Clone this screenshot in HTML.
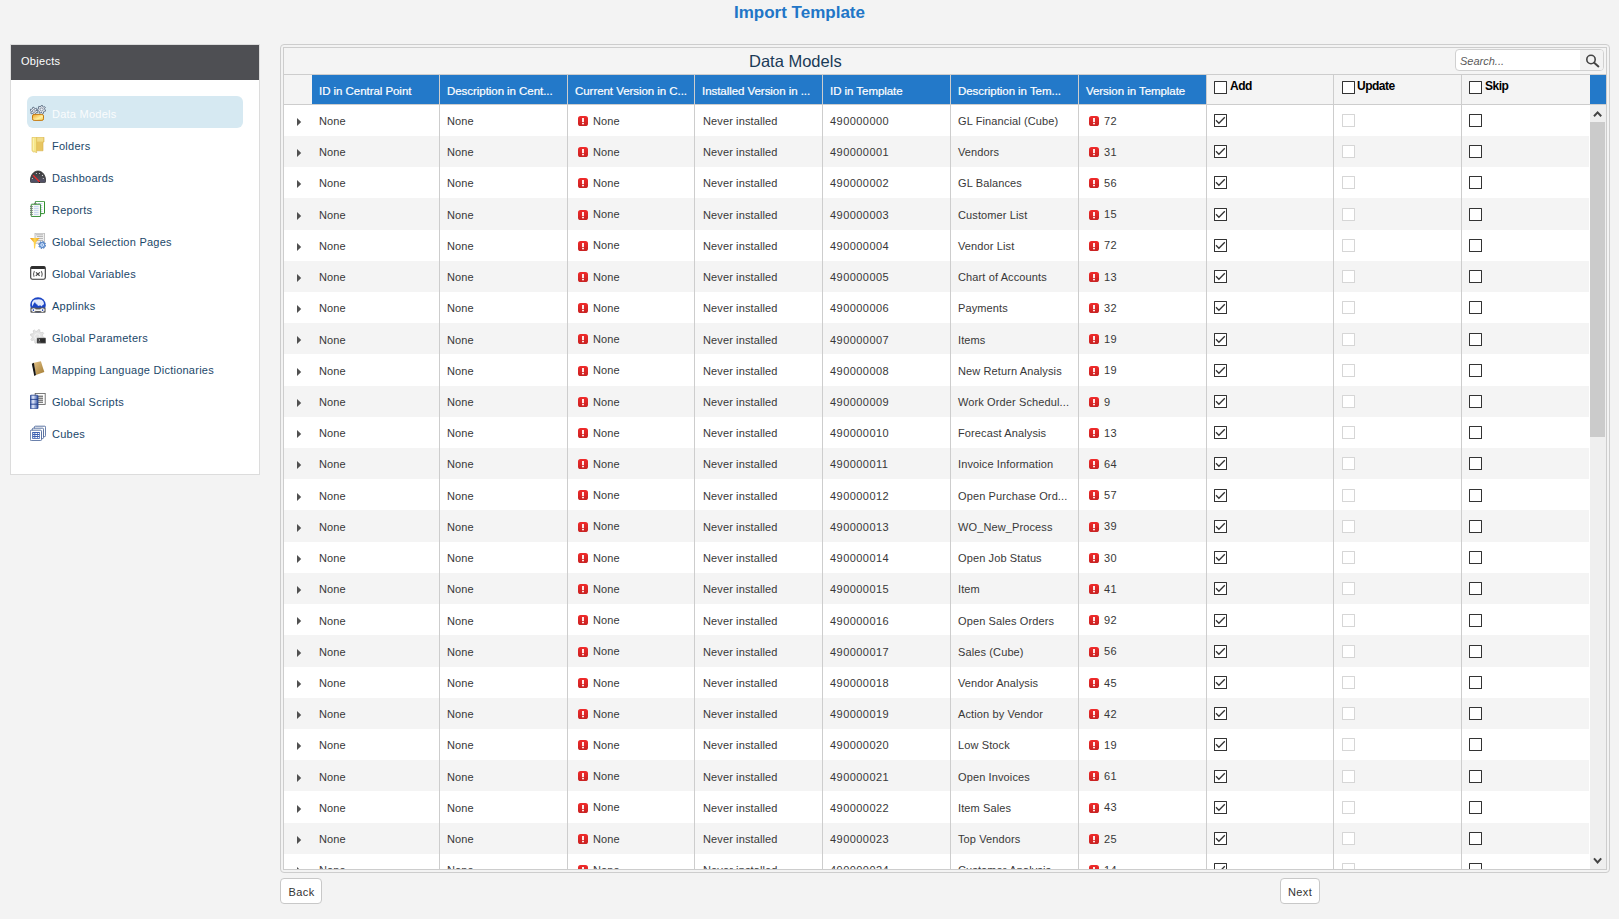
<!DOCTYPE html><html><head><meta charset='utf-8'><style>
*{margin:0;padding:0;box-sizing:border-box}
html,body{width:1619px;height:919px;overflow:hidden;background:#f3f3f3;font-family:"Liberation Sans",sans-serif;position:relative}
.a{position:absolute}
.t{position:absolute;white-space:nowrap;line-height:1}
#title{left:734px;top:4px;font-size:17px;font-weight:bold;color:#2176c7}
#side{left:10px;top:44px;width:250px;height:431px;background:#fff;border:1px solid #dcdcdc}
#sideh{left:11px;top:45px;width:248px;height:35px;background:#4e4f53}
#sideh span{position:absolute;left:10px;top:11px;font-size:11px;color:#fff;letter-spacing:0.3px;line-height:1}
.sel{left:27px;top:96px;width:216px;height:32px;background:#d6e9f2;border-radius:6px}
.it{position:absolute;left:52px;font-size:11px;color:#1b4769;letter-spacing:0.25px;line-height:1;white-space:nowrap}
.ic{position:absolute;left:29px;width:18px;height:18px}
#outer{left:280px;top:44px;width:1330px;height:829px;border:1px solid #cdcdcd;border-radius:4px}
#inner{left:283px;top:47px;width:1324px;height:823px;border:1px solid #cdcdcd;background:#f4f4f4;overflow:hidden}
.hline{left:284px;width:1322px;height:1px;background:#cdcdcd}
.vline{width:1px;background:#cdcdcd}
.hb{top:75px;height:29px;background:#2379c9}
.ht{font-size:11.5px;color:#fff;top:85.5px;letter-spacing:-0.05px;-webkit-text-stroke:0.2px #fff}
.cell{font-size:11px;color:#383838;letter-spacing:0.12px}
.num{letter-spacing:0.45px}
.row{left:284px;width:1305px;height:31.2px}
.odd{background:#f4f4f4}
.even{background:#fff}
.cb{position:absolute;width:13px;height:13px;border:1px solid #333;background:#fff;border-radius:0.5px}
.cbd{border-color:#d6d6d6}
.err{position:absolute;width:10px;height:10px}
.err svg,.cb svg{display:block}
#clip{left:0;top:0;width:1619px;height:869px;overflow:hidden}
.btn{position:absolute;top:878px;height:26px;background:#fff;border:1px solid #c8c8c8;border-radius:4px;font-size:11px;color:#333}
.btn span{position:absolute;top:8px;line-height:1;white-space:nowrap;letter-spacing:0.4px}
</style></head><body>
<div class="t" id="title">Import Template</div>
<div class="a" id="side"></div><div class="a" id="sideh"><span>Objects</span></div>
<div class="a sel"></div>
<div class="it" style="top:109px;color:#fafcfd">Data Models</div>
<svg class="a" style="left:30px;top:105px" width="16" height="16" viewBox="0 0 16 16"><defs><linearGradient id="ob" x1="0" y1="0" x2="1" y2="1"><stop offset="0" stop-color="#f0a020"/><stop offset="0.6" stop-color="#fff0a0"/><stop offset="1" stop-color="#f5c84a"/></linearGradient></defs><path d="M6.71 6.00 L7.62 6.79 L7.29 7.73 L6.09 7.77 L5.31 8.44 L5.07 9.61 L4.10 9.79 L3.46 8.78 L2.49 8.44 L1.36 8.82 L0.71 8.07 L1.27 7.01 L1.09 6.00 L0.18 5.21 L0.51 4.27 L1.71 4.23 L2.49 3.56 L2.73 2.39 L3.70 2.21 L4.34 3.22 L5.31 3.56 L6.44 3.18 L7.09 3.93 L6.53 4.99Z" fill="#eef2f8" stroke="#3a4c66" stroke-width="0.75" stroke-linejoin="round"/><circle cx="3.9" cy="6.0" r="1.44" fill="none" stroke="#7a8796" stroke-width="0.9"/><path d="M14.71 4.50 L15.73 5.25 L15.46 6.15 L14.19 6.21 L13.54 6.93 L13.59 8.20 L12.72 8.55 L11.88 7.60 L10.91 7.53 L9.95 8.36 L9.13 7.90 L9.35 6.65 L8.80 5.85 L7.55 5.62 L7.40 4.69 L8.52 4.08 L8.80 3.15 L8.20 2.03 L8.84 1.34 L10.01 1.83 L10.91 1.47 L11.41 0.30 L12.35 0.37 L12.69 1.59 L13.54 2.07 L14.76 1.74 L15.30 2.51 L14.56 3.54Z" fill="#eef2f8" stroke="#3a4c66" stroke-width="0.75" stroke-linejoin="round"/><circle cx="11.6" cy="4.5" r="1.60" fill="none" stroke="#7a8796" stroke-width="0.9"/><rect x="2.5" y="9.4" width="11" height="6" rx="1.6" fill="url(#ob)" stroke="#c47a12" stroke-width="1"/></svg>
<div class="it" style="top:141px;color:#1b4769">Folders</div>
<svg class="a" style="left:30px;top:137px" width="16" height="16" viewBox="0 0 16 16"><path d="M6.3 0.2 H14 V5 H13 V13.8 H6.3 Z" fill="#e8c661" stroke="#d6b048" stroke-width="0.6"/><rect x="6.5" y="0.6" width="6.8" height="4" fill="#f1dc8a"/><path d="M2 0.3 H6.6 V15.9 L5 14.8 L3.4 15 L2 13.8 Z" fill="#f6e68a" stroke="#dcb94c" stroke-width="0.6"/><path d="M3.3 1 V13.5" stroke="#fdf6b8" stroke-width="1"/></svg>
<div class="it" style="top:173px;color:#1b4769">Dashboards</div>
<svg class="a" style="left:30px;top:169px" width="16" height="16" viewBox="0 0 16 16"><defs><linearGradient id="dg" x1="0" y1="0" x2="0" y2="1"><stop offset="0" stop-color="#3a3a3a"/><stop offset="0.55" stop-color="#4a4a50"/><stop offset="1" stop-color="#565670"/></linearGradient></defs><path d="M0.3 12.6 C0.3 5.5 4 2 8 2 C12 2 15.7 5.5 15.7 12.6 Q15.7 13.4 14.8 13.4 H1.2 Q0.3 13.4 0.3 12.6 Z" fill="url(#dg)" stroke="#222" stroke-width="0.7"/><g fill="#d8d8d8"><circle cx="2.4" cy="9.5" r="0.6"/><circle cx="6.4" cy="4.5" r="0.6"/><circle cx="9.5" cy="4.5" r="0.6"/><circle cx="12.5" cy="6.4" r="0.6"/><circle cx="13.3" cy="9.5" r="0.6"/></g><path d="M3.1 6.3 L9.7 13" stroke="#e82a2a" stroke-width="1.3"/><path d="M9.2 12.9 L9.8 14" stroke="#111" stroke-width="1"/></svg>
<div class="it" style="top:205px;color:#1b4769">Reports</div>
<svg class="a" style="left:30px;top:201px" width="16" height="16" viewBox="0 0 16 16"><rect x="5.3" y="0.3" width="9.2" height="12.3" rx="0.6" fill="#fff" stroke="#2f8f2f" stroke-width="1"/><g stroke="#b8c8ec" stroke-width="0.7"><path d="M8 2.5H12.5M8 4.5H12.5M8 6.5H12.5M8 8.5H12.5M8 10.5H12.5"/></g><rect x="1.2" y="3.2" width="9.4" height="12.4" rx="0.6" fill="#f4f8f4" stroke="#2e8a2e" stroke-width="1"/><g stroke="#b8c8ec" stroke-width="0.8"><path d="M4 5.4H8.6M4 7.4H8.6M4 9.4H8.6M4 11.4H8.6M4 13.4H8.6"/></g><g fill="#777"><rect x="0" y="5" width="2.8" height="0.9"/><rect x="0" y="7" width="2.8" height="0.9"/><rect x="0" y="9" width="2.8" height="0.9"/><rect x="0" y="11" width="2.8" height="0.9"/><rect x="0" y="13" width="2.8" height="0.9"/><rect x="4" y="2" width="2.5" height="1"/></g></svg>
<div class="it" style="top:237px;color:#1b4769">Global Selection Pages</div>
<svg class="a" style="left:30px;top:233px" width="16" height="16" viewBox="0 0 16 16"><rect x="5" y="0.2" width="9.5" height="10" fill="#eee" stroke="#b4b4b4" stroke-width="0.8"/><g stroke="#aaa" stroke-width="0.8"><path d="M6 1.8H13M7 3.5H13M7 5.5H13M7 7.5H13"/></g><defs><linearGradient id="fg" x1="0" y1="0" x2="1" y2="0"><stop offset="0" stop-color="#e88a10"/><stop offset="0.5" stop-color="#ffd850"/><stop offset="1" stop-color="#e89a18"/></linearGradient></defs><path d="M0 5 L9.6 5 L5.8 9.5 L5 15.8 L4 15.2 L3.8 9.5 Z" fill="url(#fg)"/><path d="M14.86 12.00 L15.76 12.56 L15.58 13.25 L14.52 13.30 L14.08 13.88 L14.32 14.91 L13.71 15.27 L12.92 14.56 L12.20 14.66 L11.64 15.56 L10.95 15.38 L10.90 14.32 L10.32 13.88 L9.29 14.12 L8.93 13.51 L9.64 12.72 L9.54 12.00 L8.64 11.44 L8.82 10.75 L9.88 10.70 L10.32 10.12 L10.08 9.09 L10.69 8.73 L11.48 9.44 L12.20 9.34 L12.76 8.44 L13.45 8.62 L13.50 9.68 L14.08 10.12 L15.11 9.88 L15.47 10.49 L14.76 11.28Z" fill="#6a9ad8" stroke="#3d6fb5" stroke-width="0.7" stroke-linejoin="round"/><circle cx="12.2" cy="12.0" r="1.37" fill="none" stroke="#e8f0ff" stroke-width="0.9"/></svg>
<div class="it" style="top:269px;color:#1b4769">Global Variables</div>
<svg class="a" style="left:30px;top:265px" width="16" height="16" viewBox="0 0 16 16"><rect x="0.7" y="1.6" width="14.6" height="12.6" rx="1.8" fill="#fff" stroke="#333" stroke-width="1.1"/><rect x="0.7" y="1.6" width="14.6" height="2.4" rx="1" fill="#2e2e2e"/><path d="M4.4 6.1 Q2.8 9 4.1 11.8" fill="none" stroke="#666" stroke-width="1.1"/><path d="M11.3 6.1 Q13 9 11.6 11.8" fill="none" stroke="#666" stroke-width="1.1"/><path d="M6 7.4 L9.6 10.8 M9.9 7.4 L5.8 10.8" fill="none" stroke="#444" stroke-width="1.2"/></svg>
<div class="it" style="top:301px;color:#1b4769">Applinks</div>
<svg class="a" style="left:30px;top:297px" width="16" height="16" viewBox="0 0 16 16"><circle cx="8" cy="8" r="7.8" fill="#1a44c4"/><path d="M3.2 3.4 Q5 2 7 2.6 Q9 1.6 11.5 2.8 Q13.8 4 14 6.5 Q13.2 9 12.6 8 L11.5 9.6 L10.2 8.3 L8.6 9 L7.4 8.2 Q5.5 6.5 4.6 5.4 L3.6 6.8 L2.4 9.4 Q1.6 7 2 5.4 Z" fill="#eef3ff" opacity="0.95"/><path d="M4.6 5.4 Q6.5 7 7.6 8.4" stroke="#3a64d0" stroke-width="0.9" fill="none"/><path d="M0.4 11.4 Q0.4 10.4 1.4 10.4 L6 10.4 Q8 11 10 10.4 L14.6 10.4 Q15.6 10.4 15.6 11.4 V14.8 Q15.6 15.8 14.6 15.8 H1.4 Q0.4 15.8 0.4 14.8 Z" fill="#5a5a5a"/><ellipse cx="3.6" cy="13.1" rx="2.3" ry="1.8" fill="#fff"/><ellipse cx="12.4" cy="13.1" rx="2.3" ry="1.8" fill="#fff"/><rect x="5.2" y="12.4" width="5.6" height="1.6" fill="#f4f4f4"/><ellipse cx="3.4" cy="13.1" rx="0.8" ry="0.9" fill="#1a3cb0"/><ellipse cx="12.6" cy="13.1" rx="0.8" ry="0.9" fill="#1a3cb0"/></svg>
<div class="it" style="top:333px;color:#1b4769">Global Parameters</div>
<svg class="a" style="left:30px;top:329px" width="16" height="16" viewBox="0 0 16 16"><path d="M12.48 7.40 L14.21 8.50 L13.87 9.82 L11.82 9.93 L10.96 11.06 L11.41 13.06 L10.23 13.76 L8.71 12.39 L7.30 12.58 L6.20 14.31 L4.88 13.97 L4.77 11.92 L3.64 11.06 L1.64 11.51 L0.94 10.33 L2.31 8.81 L2.12 7.40 L0.39 6.30 L0.73 4.98 L2.78 4.87 L3.64 3.74 L3.19 1.74 L4.37 1.04 L5.89 2.41 L7.30 2.22 L8.40 0.49 L9.72 0.83 L9.83 2.88 L10.96 3.74 L12.96 3.29 L13.66 4.47 L12.29 5.99Z" fill="#e4e4e4" stroke="#d0d0d0" stroke-width="0.8" stroke-linejoin="round"/><circle cx="7.3" cy="7.4" r="2.66" fill="none" stroke="#f6f6f6" stroke-width="0.9"/><rect x="7" y="8.9" width="8.8" height="5.3" rx="0.5" fill="#2c2c2c" stroke="#888" stroke-width="0.5"/><path d="M8.5 10 L10 11 L8.5 12" stroke="#ddd" stroke-width="0.6" fill="none"/><path d="M8.3 13.1H10.5" stroke="#aaa" stroke-width="0.5"/></svg>
<div class="it" style="top:365px;color:#1b4769">Mapping Language Dictionaries</div>
<svg class="a" style="left:30px;top:361px" width="16" height="16" viewBox="0 0 16 16"><defs><linearGradient id="bk" x1="0" y1="0" x2="1" y2="1"><stop offset="0" stop-color="#e2c288"/><stop offset="1" stop-color="#a27a30"/></linearGradient></defs><path d="M3.8 1.8 L10.9 0.2 L14.3 11 L5.9 13.9 Z" fill="url(#bk)"/><path d="M1.8 2.8 L3.9 1.8 L6 13.9 L4.3 15 Z" fill="#151515"/></svg>
<div class="it" style="top:397px;color:#1b4769">Global Scripts</div>
<svg class="a" style="left:30px;top:393px" width="16" height="16" viewBox="0 0 16 16"><rect x="5.2" y="0.4" width="10" height="11" fill="#fff" stroke="#666" stroke-width="0.9"/><g stroke="#333" stroke-width="0.9"><path d="M8 3.2H13M8 5.2H13M8 7.2H13M8 9.2H13"/></g><defs><linearGradient id="db" x1="0" y1="0" x2="1" y2="0"><stop offset="0" stop-color="#3455a8"/><stop offset="0.35" stop-color="#e8eeff"/><stop offset="1" stop-color="#2f4fa0"/></linearGradient></defs><rect x="0.2" y="2.2" width="7.8" height="13.6" rx="0.8" fill="url(#db)" stroke="#213f8c" stroke-width="0.8"/><path d="M0.2 6.4H8M0.2 11.2H8" stroke="#213f8c" stroke-width="0.9"/></svg>
<div class="it" style="top:429px;color:#1b4769">Cubes</div>
<svg class="a" style="left:30px;top:425px" width="16" height="16" viewBox="0 0 16 16"><g fill="#fff" stroke="#4a6498" stroke-width="0.9"><rect x="4.4" y="1.2" width="11.2" height="10.4" rx="1"/><rect x="2.3" y="3.2" width="11.2" height="10.4" rx="1"/><rect x="0.3" y="5.2" width="11.2" height="10.4" rx="1"/></g><rect x="2.2" y="7" width="7.6" height="6.8" fill="#3b5fb0"/><g fill="#fff"><rect x="3.2" y="8" width="1.2" height="1"/><rect x="5.3" y="8" width="2" height="1"/><rect x="8" y="8" width="1.1" height="1"/><rect x="3.2" y="10" width="1.2" height="1"/><rect x="5.3" y="10" width="2" height="1"/><rect x="8" y="10" width="1.1" height="1"/><rect x="3.2" y="12" width="1.2" height="1"/><rect x="5.3" y="12" width="2" height="1"/><rect x="8" y="12" width="1.1" height="1"/></g></svg>
<div class="a" id="outer"></div><div class="a" id="inner"></div>
<div class="t" style="left:749px;top:53px;font-size:16.5px;color:#1a3a57">Data Models</div>
<div class="a" style="left:1455px;top:49px;width:149px;height:22px;border:1px solid #d0d0d0;border-radius:4px;background:#fff;overflow:hidden"><div class="a" style="left:124px;top:0;width:24px;height:20px;background:#f2f2f2"></div></div>
<div class="t" style="left:1460px;top:56px;font-size:11px;font-style:italic;color:#5a5a5a">Search...</div>
<svg class="a" style="left:1584px;top:52px" width="16" height="16" viewBox="0 0 16 16"><circle cx="7" cy="7.5" r="4.2" fill="none" stroke="#444" stroke-width="1.6"/><path d="M10.2 10.7 L14.4 14.4" stroke="#444" stroke-width="2" stroke-linecap="round"/></svg>
<div class="a hline" style="top:74px"></div>
<div class="a" style="left:284px;top:75px;width:28px;height:29px;background:#f4f4f4"></div>
<div class="a hb" style="left:312px;width:894px"></div>
<div class="a hb" style="left:1590px;width:16px"></div>
<div class="t ht" style="left:319px">ID in Central Point</div>
<div class="t ht" style="left:447px">Description in Cent...</div>
<div class="t ht" style="left:575px">Current Version in C...</div>
<div class="t ht" style="left:702px">Installed Version in ...</div>
<div class="t ht" style="left:830px">ID in Template</div>
<div class="t ht" style="left:958px">Description in Tem...</div>
<div class="t ht" style="left:1086px">Version in Template</div>
<div class="cb" style="left:1214px;top:81px"></div>
<div class="t" style="left:1230px;top:80px;font-size:12px;font-weight:bold;color:#000;letter-spacing:-0.5px">Add</div>
<div class="cb" style="left:1342px;top:81px"></div>
<div class="t" style="left:1357px;top:80px;font-size:12px;font-weight:bold;color:#000;letter-spacing:-0.5px">Update</div>
<div class="cb" style="left:1469px;top:81px"></div>
<div class="t" style="left:1485px;top:80px;font-size:12px;font-weight:bold;color:#000;letter-spacing:-0.5px">Skip</div>
<div class="a hline" style="top:104px"></div>
<div class="a" id="clip">
<div class="a row even" style="top:104.6px"></div>
<svg class="a" style="left:297px;top:117.9px" width="5" height="8"><path d="M0 0 L4.2 4 L0 8 Z" fill="#505050"/></svg>
<div class="t cell" style="left:319px;top:116.0px">None</div>
<div class="t cell" style="left:447px;top:116.0px">None</div>
<div class="err" style="left:578px;top:115.8px"><svg width="10" height="10" viewBox="0 0 10 10"><defs><linearGradient id="rg" x1="0" y1="0" x2="0" y2="1"><stop offset="0" stop-color="#f02a2a"/><stop offset="1" stop-color="#c82222"/></linearGradient></defs><rect x="0" y="0" width="10" height="10" rx="2.6" fill="url(#rg)"/><rect x="4.1" y="2" width="1.8" height="4.2" fill="#fff"/><rect x="4.1" y="7" width="1.8" height="1.3" fill="#fff"/></svg></div>
<div class="t cell" style="left:593px;top:115.5px">None</div>
<div class="t cell" style="left:703px;top:116.0px">Never installed</div>
<div class="t cell num" style="left:830px;top:116.0px">490000000</div>
<div class="t cell" style="left:958px;top:116.0px">GL Financial (Cube)</div>
<div class="err" style="left:1089px;top:115.8px"><svg width="10" height="10" viewBox="0 0 10 10"><defs><linearGradient id="rg" x1="0" y1="0" x2="0" y2="1"><stop offset="0" stop-color="#f02a2a"/><stop offset="1" stop-color="#c82222"/></linearGradient></defs><rect x="0" y="0" width="10" height="10" rx="2.6" fill="url(#rg)"/><rect x="4.1" y="2" width="1.8" height="4.2" fill="#fff"/><rect x="4.1" y="7" width="1.8" height="1.3" fill="#fff"/></svg></div>
<div class="t cell num" style="left:1104px;top:115.5px">72</div>
<div class="cb" style="left:1214px;top:114.0px"><svg class="a" style="left:0px;top:0px" width="11" height="11" viewBox="0 0 11 11"><path d="M1 5.3 L3.9 8.3 L9.8 2.3" fill="none" stroke="#333" stroke-width="1.3"/></svg></div>
<div class="cb cbd" style="left:1342px;top:114.0px"></div>
<div class="cb" style="left:1469px;top:114.0px"></div>
<div class="a row odd" style="top:135.8px"></div>
<svg class="a" style="left:297px;top:149.1px" width="5" height="8"><path d="M0 0 L4.2 4 L0 8 Z" fill="#505050"/></svg>
<div class="t cell" style="left:319px;top:147.2px">None</div>
<div class="t cell" style="left:447px;top:147.2px">None</div>
<div class="err" style="left:578px;top:147.0px"><svg width="10" height="10" viewBox="0 0 10 10"><defs><linearGradient id="rg" x1="0" y1="0" x2="0" y2="1"><stop offset="0" stop-color="#f02a2a"/><stop offset="1" stop-color="#c82222"/></linearGradient></defs><rect x="0" y="0" width="10" height="10" rx="2.6" fill="url(#rg)"/><rect x="4.1" y="2" width="1.8" height="4.2" fill="#fff"/><rect x="4.1" y="7" width="1.8" height="1.3" fill="#fff"/></svg></div>
<div class="t cell" style="left:593px;top:146.7px">None</div>
<div class="t cell" style="left:703px;top:147.2px">Never installed</div>
<div class="t cell num" style="left:830px;top:147.2px">490000001</div>
<div class="t cell" style="left:958px;top:147.2px">Vendors</div>
<div class="err" style="left:1089px;top:147.0px"><svg width="10" height="10" viewBox="0 0 10 10"><defs><linearGradient id="rg" x1="0" y1="0" x2="0" y2="1"><stop offset="0" stop-color="#f02a2a"/><stop offset="1" stop-color="#c82222"/></linearGradient></defs><rect x="0" y="0" width="10" height="10" rx="2.6" fill="url(#rg)"/><rect x="4.1" y="2" width="1.8" height="4.2" fill="#fff"/><rect x="4.1" y="7" width="1.8" height="1.3" fill="#fff"/></svg></div>
<div class="t cell num" style="left:1104px;top:146.7px">31</div>
<div class="cb" style="left:1214px;top:145.2px"><svg class="a" style="left:0px;top:0px" width="11" height="11" viewBox="0 0 11 11"><path d="M1 5.3 L3.9 8.3 L9.8 2.3" fill="none" stroke="#333" stroke-width="1.3"/></svg></div>
<div class="cb cbd" style="left:1342px;top:145.2px"></div>
<div class="cb" style="left:1469px;top:145.2px"></div>
<div class="a row even" style="top:167.0px"></div>
<svg class="a" style="left:297px;top:180.3px" width="5" height="8"><path d="M0 0 L4.2 4 L0 8 Z" fill="#505050"/></svg>
<div class="t cell" style="left:319px;top:178.4px">None</div>
<div class="t cell" style="left:447px;top:178.4px">None</div>
<div class="err" style="left:578px;top:178.2px"><svg width="10" height="10" viewBox="0 0 10 10"><defs><linearGradient id="rg" x1="0" y1="0" x2="0" y2="1"><stop offset="0" stop-color="#f02a2a"/><stop offset="1" stop-color="#c82222"/></linearGradient></defs><rect x="0" y="0" width="10" height="10" rx="2.6" fill="url(#rg)"/><rect x="4.1" y="2" width="1.8" height="4.2" fill="#fff"/><rect x="4.1" y="7" width="1.8" height="1.3" fill="#fff"/></svg></div>
<div class="t cell" style="left:593px;top:177.9px">None</div>
<div class="t cell" style="left:703px;top:178.4px">Never installed</div>
<div class="t cell num" style="left:830px;top:178.4px">490000002</div>
<div class="t cell" style="left:958px;top:178.4px">GL Balances</div>
<div class="err" style="left:1089px;top:178.2px"><svg width="10" height="10" viewBox="0 0 10 10"><defs><linearGradient id="rg" x1="0" y1="0" x2="0" y2="1"><stop offset="0" stop-color="#f02a2a"/><stop offset="1" stop-color="#c82222"/></linearGradient></defs><rect x="0" y="0" width="10" height="10" rx="2.6" fill="url(#rg)"/><rect x="4.1" y="2" width="1.8" height="4.2" fill="#fff"/><rect x="4.1" y="7" width="1.8" height="1.3" fill="#fff"/></svg></div>
<div class="t cell num" style="left:1104px;top:177.9px">56</div>
<div class="cb" style="left:1214px;top:176.4px"><svg class="a" style="left:0px;top:0px" width="11" height="11" viewBox="0 0 11 11"><path d="M1 5.3 L3.9 8.3 L9.8 2.3" fill="none" stroke="#333" stroke-width="1.3"/></svg></div>
<div class="cb cbd" style="left:1342px;top:176.4px"></div>
<div class="cb" style="left:1469px;top:176.4px"></div>
<div class="a row odd" style="top:198.3px"></div>
<svg class="a" style="left:297px;top:211.6px" width="5" height="8"><path d="M0 0 L4.2 4 L0 8 Z" fill="#505050"/></svg>
<div class="t cell" style="left:319px;top:209.7px">None</div>
<div class="t cell" style="left:447px;top:209.7px">None</div>
<div class="err" style="left:578px;top:209.5px"><svg width="10" height="10" viewBox="0 0 10 10"><defs><linearGradient id="rg" x1="0" y1="0" x2="0" y2="1"><stop offset="0" stop-color="#f02a2a"/><stop offset="1" stop-color="#c82222"/></linearGradient></defs><rect x="0" y="0" width="10" height="10" rx="2.6" fill="url(#rg)"/><rect x="4.1" y="2" width="1.8" height="4.2" fill="#fff"/><rect x="4.1" y="7" width="1.8" height="1.3" fill="#fff"/></svg></div>
<div class="t cell" style="left:593px;top:209.2px">None</div>
<div class="t cell" style="left:703px;top:209.7px">Never installed</div>
<div class="t cell num" style="left:830px;top:209.7px">490000003</div>
<div class="t cell" style="left:958px;top:209.7px">Customer List</div>
<div class="err" style="left:1089px;top:209.5px"><svg width="10" height="10" viewBox="0 0 10 10"><defs><linearGradient id="rg" x1="0" y1="0" x2="0" y2="1"><stop offset="0" stop-color="#f02a2a"/><stop offset="1" stop-color="#c82222"/></linearGradient></defs><rect x="0" y="0" width="10" height="10" rx="2.6" fill="url(#rg)"/><rect x="4.1" y="2" width="1.8" height="4.2" fill="#fff"/><rect x="4.1" y="7" width="1.8" height="1.3" fill="#fff"/></svg></div>
<div class="t cell num" style="left:1104px;top:209.2px">15</div>
<div class="cb" style="left:1214px;top:207.7px"><svg class="a" style="left:0px;top:0px" width="11" height="11" viewBox="0 0 11 11"><path d="M1 5.3 L3.9 8.3 L9.8 2.3" fill="none" stroke="#333" stroke-width="1.3"/></svg></div>
<div class="cb cbd" style="left:1342px;top:207.7px"></div>
<div class="cb" style="left:1469px;top:207.7px"></div>
<div class="a row even" style="top:229.5px"></div>
<svg class="a" style="left:297px;top:242.8px" width="5" height="8"><path d="M0 0 L4.2 4 L0 8 Z" fill="#505050"/></svg>
<div class="t cell" style="left:319px;top:240.9px">None</div>
<div class="t cell" style="left:447px;top:240.9px">None</div>
<div class="err" style="left:578px;top:240.7px"><svg width="10" height="10" viewBox="0 0 10 10"><defs><linearGradient id="rg" x1="0" y1="0" x2="0" y2="1"><stop offset="0" stop-color="#f02a2a"/><stop offset="1" stop-color="#c82222"/></linearGradient></defs><rect x="0" y="0" width="10" height="10" rx="2.6" fill="url(#rg)"/><rect x="4.1" y="2" width="1.8" height="4.2" fill="#fff"/><rect x="4.1" y="7" width="1.8" height="1.3" fill="#fff"/></svg></div>
<div class="t cell" style="left:593px;top:240.4px">None</div>
<div class="t cell" style="left:703px;top:240.9px">Never installed</div>
<div class="t cell num" style="left:830px;top:240.9px">490000004</div>
<div class="t cell" style="left:958px;top:240.9px">Vendor List</div>
<div class="err" style="left:1089px;top:240.7px"><svg width="10" height="10" viewBox="0 0 10 10"><defs><linearGradient id="rg" x1="0" y1="0" x2="0" y2="1"><stop offset="0" stop-color="#f02a2a"/><stop offset="1" stop-color="#c82222"/></linearGradient></defs><rect x="0" y="0" width="10" height="10" rx="2.6" fill="url(#rg)"/><rect x="4.1" y="2" width="1.8" height="4.2" fill="#fff"/><rect x="4.1" y="7" width="1.8" height="1.3" fill="#fff"/></svg></div>
<div class="t cell num" style="left:1104px;top:240.4px">72</div>
<div class="cb" style="left:1214px;top:238.9px"><svg class="a" style="left:0px;top:0px" width="11" height="11" viewBox="0 0 11 11"><path d="M1 5.3 L3.9 8.3 L9.8 2.3" fill="none" stroke="#333" stroke-width="1.3"/></svg></div>
<div class="cb cbd" style="left:1342px;top:238.9px"></div>
<div class="cb" style="left:1469px;top:238.9px"></div>
<div class="a row odd" style="top:260.7px"></div>
<svg class="a" style="left:297px;top:274.0px" width="5" height="8"><path d="M0 0 L4.2 4 L0 8 Z" fill="#505050"/></svg>
<div class="t cell" style="left:319px;top:272.1px">None</div>
<div class="t cell" style="left:447px;top:272.1px">None</div>
<div class="err" style="left:578px;top:271.9px"><svg width="10" height="10" viewBox="0 0 10 10"><defs><linearGradient id="rg" x1="0" y1="0" x2="0" y2="1"><stop offset="0" stop-color="#f02a2a"/><stop offset="1" stop-color="#c82222"/></linearGradient></defs><rect x="0" y="0" width="10" height="10" rx="2.6" fill="url(#rg)"/><rect x="4.1" y="2" width="1.8" height="4.2" fill="#fff"/><rect x="4.1" y="7" width="1.8" height="1.3" fill="#fff"/></svg></div>
<div class="t cell" style="left:593px;top:271.6px">None</div>
<div class="t cell" style="left:703px;top:272.1px">Never installed</div>
<div class="t cell num" style="left:830px;top:272.1px">490000005</div>
<div class="t cell" style="left:958px;top:272.1px">Chart of Accounts</div>
<div class="err" style="left:1089px;top:271.9px"><svg width="10" height="10" viewBox="0 0 10 10"><defs><linearGradient id="rg" x1="0" y1="0" x2="0" y2="1"><stop offset="0" stop-color="#f02a2a"/><stop offset="1" stop-color="#c82222"/></linearGradient></defs><rect x="0" y="0" width="10" height="10" rx="2.6" fill="url(#rg)"/><rect x="4.1" y="2" width="1.8" height="4.2" fill="#fff"/><rect x="4.1" y="7" width="1.8" height="1.3" fill="#fff"/></svg></div>
<div class="t cell num" style="left:1104px;top:271.6px">13</div>
<div class="cb" style="left:1214px;top:270.1px"><svg class="a" style="left:0px;top:0px" width="11" height="11" viewBox="0 0 11 11"><path d="M1 5.3 L3.9 8.3 L9.8 2.3" fill="none" stroke="#333" stroke-width="1.3"/></svg></div>
<div class="cb cbd" style="left:1342px;top:270.1px"></div>
<div class="cb" style="left:1469px;top:270.1px"></div>
<div class="a row even" style="top:291.9px"></div>
<svg class="a" style="left:297px;top:305.2px" width="5" height="8"><path d="M0 0 L4.2 4 L0 8 Z" fill="#505050"/></svg>
<div class="t cell" style="left:319px;top:303.3px">None</div>
<div class="t cell" style="left:447px;top:303.3px">None</div>
<div class="err" style="left:578px;top:303.1px"><svg width="10" height="10" viewBox="0 0 10 10"><defs><linearGradient id="rg" x1="0" y1="0" x2="0" y2="1"><stop offset="0" stop-color="#f02a2a"/><stop offset="1" stop-color="#c82222"/></linearGradient></defs><rect x="0" y="0" width="10" height="10" rx="2.6" fill="url(#rg)"/><rect x="4.1" y="2" width="1.8" height="4.2" fill="#fff"/><rect x="4.1" y="7" width="1.8" height="1.3" fill="#fff"/></svg></div>
<div class="t cell" style="left:593px;top:302.8px">None</div>
<div class="t cell" style="left:703px;top:303.3px">Never installed</div>
<div class="t cell num" style="left:830px;top:303.3px">490000006</div>
<div class="t cell" style="left:958px;top:303.3px">Payments</div>
<div class="err" style="left:1089px;top:303.1px"><svg width="10" height="10" viewBox="0 0 10 10"><defs><linearGradient id="rg" x1="0" y1="0" x2="0" y2="1"><stop offset="0" stop-color="#f02a2a"/><stop offset="1" stop-color="#c82222"/></linearGradient></defs><rect x="0" y="0" width="10" height="10" rx="2.6" fill="url(#rg)"/><rect x="4.1" y="2" width="1.8" height="4.2" fill="#fff"/><rect x="4.1" y="7" width="1.8" height="1.3" fill="#fff"/></svg></div>
<div class="t cell num" style="left:1104px;top:302.8px">32</div>
<div class="cb" style="left:1214px;top:301.3px"><svg class="a" style="left:0px;top:0px" width="11" height="11" viewBox="0 0 11 11"><path d="M1 5.3 L3.9 8.3 L9.8 2.3" fill="none" stroke="#333" stroke-width="1.3"/></svg></div>
<div class="cb cbd" style="left:1342px;top:301.3px"></div>
<div class="cb" style="left:1469px;top:301.3px"></div>
<div class="a row odd" style="top:323.1px"></div>
<svg class="a" style="left:297px;top:336.4px" width="5" height="8"><path d="M0 0 L4.2 4 L0 8 Z" fill="#505050"/></svg>
<div class="t cell" style="left:319px;top:334.5px">None</div>
<div class="t cell" style="left:447px;top:334.5px">None</div>
<div class="err" style="left:578px;top:334.3px"><svg width="10" height="10" viewBox="0 0 10 10"><defs><linearGradient id="rg" x1="0" y1="0" x2="0" y2="1"><stop offset="0" stop-color="#f02a2a"/><stop offset="1" stop-color="#c82222"/></linearGradient></defs><rect x="0" y="0" width="10" height="10" rx="2.6" fill="url(#rg)"/><rect x="4.1" y="2" width="1.8" height="4.2" fill="#fff"/><rect x="4.1" y="7" width="1.8" height="1.3" fill="#fff"/></svg></div>
<div class="t cell" style="left:593px;top:334.0px">None</div>
<div class="t cell" style="left:703px;top:334.5px">Never installed</div>
<div class="t cell num" style="left:830px;top:334.5px">490000007</div>
<div class="t cell" style="left:958px;top:334.5px">Items</div>
<div class="err" style="left:1089px;top:334.3px"><svg width="10" height="10" viewBox="0 0 10 10"><defs><linearGradient id="rg" x1="0" y1="0" x2="0" y2="1"><stop offset="0" stop-color="#f02a2a"/><stop offset="1" stop-color="#c82222"/></linearGradient></defs><rect x="0" y="0" width="10" height="10" rx="2.6" fill="url(#rg)"/><rect x="4.1" y="2" width="1.8" height="4.2" fill="#fff"/><rect x="4.1" y="7" width="1.8" height="1.3" fill="#fff"/></svg></div>
<div class="t cell num" style="left:1104px;top:334.0px">19</div>
<div class="cb" style="left:1214px;top:332.5px"><svg class="a" style="left:0px;top:0px" width="11" height="11" viewBox="0 0 11 11"><path d="M1 5.3 L3.9 8.3 L9.8 2.3" fill="none" stroke="#333" stroke-width="1.3"/></svg></div>
<div class="cb cbd" style="left:1342px;top:332.5px"></div>
<div class="cb" style="left:1469px;top:332.5px"></div>
<div class="a row even" style="top:354.4px"></div>
<svg class="a" style="left:297px;top:367.7px" width="5" height="8"><path d="M0 0 L4.2 4 L0 8 Z" fill="#505050"/></svg>
<div class="t cell" style="left:319px;top:365.8px">None</div>
<div class="t cell" style="left:447px;top:365.8px">None</div>
<div class="err" style="left:578px;top:365.6px"><svg width="10" height="10" viewBox="0 0 10 10"><defs><linearGradient id="rg" x1="0" y1="0" x2="0" y2="1"><stop offset="0" stop-color="#f02a2a"/><stop offset="1" stop-color="#c82222"/></linearGradient></defs><rect x="0" y="0" width="10" height="10" rx="2.6" fill="url(#rg)"/><rect x="4.1" y="2" width="1.8" height="4.2" fill="#fff"/><rect x="4.1" y="7" width="1.8" height="1.3" fill="#fff"/></svg></div>
<div class="t cell" style="left:593px;top:365.3px">None</div>
<div class="t cell" style="left:703px;top:365.8px">Never installed</div>
<div class="t cell num" style="left:830px;top:365.8px">490000008</div>
<div class="t cell" style="left:958px;top:365.8px">New Return Analysis</div>
<div class="err" style="left:1089px;top:365.6px"><svg width="10" height="10" viewBox="0 0 10 10"><defs><linearGradient id="rg" x1="0" y1="0" x2="0" y2="1"><stop offset="0" stop-color="#f02a2a"/><stop offset="1" stop-color="#c82222"/></linearGradient></defs><rect x="0" y="0" width="10" height="10" rx="2.6" fill="url(#rg)"/><rect x="4.1" y="2" width="1.8" height="4.2" fill="#fff"/><rect x="4.1" y="7" width="1.8" height="1.3" fill="#fff"/></svg></div>
<div class="t cell num" style="left:1104px;top:365.3px">19</div>
<div class="cb" style="left:1214px;top:363.8px"><svg class="a" style="left:0px;top:0px" width="11" height="11" viewBox="0 0 11 11"><path d="M1 5.3 L3.9 8.3 L9.8 2.3" fill="none" stroke="#333" stroke-width="1.3"/></svg></div>
<div class="cb cbd" style="left:1342px;top:363.8px"></div>
<div class="cb" style="left:1469px;top:363.8px"></div>
<div class="a row odd" style="top:385.6px"></div>
<svg class="a" style="left:297px;top:398.9px" width="5" height="8"><path d="M0 0 L4.2 4 L0 8 Z" fill="#505050"/></svg>
<div class="t cell" style="left:319px;top:397.0px">None</div>
<div class="t cell" style="left:447px;top:397.0px">None</div>
<div class="err" style="left:578px;top:396.8px"><svg width="10" height="10" viewBox="0 0 10 10"><defs><linearGradient id="rg" x1="0" y1="0" x2="0" y2="1"><stop offset="0" stop-color="#f02a2a"/><stop offset="1" stop-color="#c82222"/></linearGradient></defs><rect x="0" y="0" width="10" height="10" rx="2.6" fill="url(#rg)"/><rect x="4.1" y="2" width="1.8" height="4.2" fill="#fff"/><rect x="4.1" y="7" width="1.8" height="1.3" fill="#fff"/></svg></div>
<div class="t cell" style="left:593px;top:396.5px">None</div>
<div class="t cell" style="left:703px;top:397.0px">Never installed</div>
<div class="t cell num" style="left:830px;top:397.0px">490000009</div>
<div class="t cell" style="left:958px;top:397.0px">Work Order Schedul...</div>
<div class="err" style="left:1089px;top:396.8px"><svg width="10" height="10" viewBox="0 0 10 10"><defs><linearGradient id="rg" x1="0" y1="0" x2="0" y2="1"><stop offset="0" stop-color="#f02a2a"/><stop offset="1" stop-color="#c82222"/></linearGradient></defs><rect x="0" y="0" width="10" height="10" rx="2.6" fill="url(#rg)"/><rect x="4.1" y="2" width="1.8" height="4.2" fill="#fff"/><rect x="4.1" y="7" width="1.8" height="1.3" fill="#fff"/></svg></div>
<div class="t cell num" style="left:1104px;top:396.5px">9</div>
<div class="cb" style="left:1214px;top:395.0px"><svg class="a" style="left:0px;top:0px" width="11" height="11" viewBox="0 0 11 11"><path d="M1 5.3 L3.9 8.3 L9.8 2.3" fill="none" stroke="#333" stroke-width="1.3"/></svg></div>
<div class="cb cbd" style="left:1342px;top:395.0px"></div>
<div class="cb" style="left:1469px;top:395.0px"></div>
<div class="a row even" style="top:416.8px"></div>
<svg class="a" style="left:297px;top:430.1px" width="5" height="8"><path d="M0 0 L4.2 4 L0 8 Z" fill="#505050"/></svg>
<div class="t cell" style="left:319px;top:428.2px">None</div>
<div class="t cell" style="left:447px;top:428.2px">None</div>
<div class="err" style="left:578px;top:428.0px"><svg width="10" height="10" viewBox="0 0 10 10"><defs><linearGradient id="rg" x1="0" y1="0" x2="0" y2="1"><stop offset="0" stop-color="#f02a2a"/><stop offset="1" stop-color="#c82222"/></linearGradient></defs><rect x="0" y="0" width="10" height="10" rx="2.6" fill="url(#rg)"/><rect x="4.1" y="2" width="1.8" height="4.2" fill="#fff"/><rect x="4.1" y="7" width="1.8" height="1.3" fill="#fff"/></svg></div>
<div class="t cell" style="left:593px;top:427.7px">None</div>
<div class="t cell" style="left:703px;top:428.2px">Never installed</div>
<div class="t cell num" style="left:830px;top:428.2px">490000010</div>
<div class="t cell" style="left:958px;top:428.2px">Forecast Analysis</div>
<div class="err" style="left:1089px;top:428.0px"><svg width="10" height="10" viewBox="0 0 10 10"><defs><linearGradient id="rg" x1="0" y1="0" x2="0" y2="1"><stop offset="0" stop-color="#f02a2a"/><stop offset="1" stop-color="#c82222"/></linearGradient></defs><rect x="0" y="0" width="10" height="10" rx="2.6" fill="url(#rg)"/><rect x="4.1" y="2" width="1.8" height="4.2" fill="#fff"/><rect x="4.1" y="7" width="1.8" height="1.3" fill="#fff"/></svg></div>
<div class="t cell num" style="left:1104px;top:427.7px">13</div>
<div class="cb" style="left:1214px;top:426.2px"><svg class="a" style="left:0px;top:0px" width="11" height="11" viewBox="0 0 11 11"><path d="M1 5.3 L3.9 8.3 L9.8 2.3" fill="none" stroke="#333" stroke-width="1.3"/></svg></div>
<div class="cb cbd" style="left:1342px;top:426.2px"></div>
<div class="cb" style="left:1469px;top:426.2px"></div>
<div class="a row odd" style="top:448.0px"></div>
<svg class="a" style="left:297px;top:461.3px" width="5" height="8"><path d="M0 0 L4.2 4 L0 8 Z" fill="#505050"/></svg>
<div class="t cell" style="left:319px;top:459.4px">None</div>
<div class="t cell" style="left:447px;top:459.4px">None</div>
<div class="err" style="left:578px;top:459.2px"><svg width="10" height="10" viewBox="0 0 10 10"><defs><linearGradient id="rg" x1="0" y1="0" x2="0" y2="1"><stop offset="0" stop-color="#f02a2a"/><stop offset="1" stop-color="#c82222"/></linearGradient></defs><rect x="0" y="0" width="10" height="10" rx="2.6" fill="url(#rg)"/><rect x="4.1" y="2" width="1.8" height="4.2" fill="#fff"/><rect x="4.1" y="7" width="1.8" height="1.3" fill="#fff"/></svg></div>
<div class="t cell" style="left:593px;top:458.9px">None</div>
<div class="t cell" style="left:703px;top:459.4px">Never installed</div>
<div class="t cell num" style="left:830px;top:459.4px">490000011</div>
<div class="t cell" style="left:958px;top:459.4px">Invoice Information</div>
<div class="err" style="left:1089px;top:459.2px"><svg width="10" height="10" viewBox="0 0 10 10"><defs><linearGradient id="rg" x1="0" y1="0" x2="0" y2="1"><stop offset="0" stop-color="#f02a2a"/><stop offset="1" stop-color="#c82222"/></linearGradient></defs><rect x="0" y="0" width="10" height="10" rx="2.6" fill="url(#rg)"/><rect x="4.1" y="2" width="1.8" height="4.2" fill="#fff"/><rect x="4.1" y="7" width="1.8" height="1.3" fill="#fff"/></svg></div>
<div class="t cell num" style="left:1104px;top:458.9px">64</div>
<div class="cb" style="left:1214px;top:457.4px"><svg class="a" style="left:0px;top:0px" width="11" height="11" viewBox="0 0 11 11"><path d="M1 5.3 L3.9 8.3 L9.8 2.3" fill="none" stroke="#333" stroke-width="1.3"/></svg></div>
<div class="cb cbd" style="left:1342px;top:457.4px"></div>
<div class="cb" style="left:1469px;top:457.4px"></div>
<div class="a row even" style="top:479.2px"></div>
<svg class="a" style="left:297px;top:492.5px" width="5" height="8"><path d="M0 0 L4.2 4 L0 8 Z" fill="#505050"/></svg>
<div class="t cell" style="left:319px;top:490.6px">None</div>
<div class="t cell" style="left:447px;top:490.6px">None</div>
<div class="err" style="left:578px;top:490.4px"><svg width="10" height="10" viewBox="0 0 10 10"><defs><linearGradient id="rg" x1="0" y1="0" x2="0" y2="1"><stop offset="0" stop-color="#f02a2a"/><stop offset="1" stop-color="#c82222"/></linearGradient></defs><rect x="0" y="0" width="10" height="10" rx="2.6" fill="url(#rg)"/><rect x="4.1" y="2" width="1.8" height="4.2" fill="#fff"/><rect x="4.1" y="7" width="1.8" height="1.3" fill="#fff"/></svg></div>
<div class="t cell" style="left:593px;top:490.1px">None</div>
<div class="t cell" style="left:703px;top:490.6px">Never installed</div>
<div class="t cell num" style="left:830px;top:490.6px">490000012</div>
<div class="t cell" style="left:958px;top:490.6px">Open Purchase Ord...</div>
<div class="err" style="left:1089px;top:490.4px"><svg width="10" height="10" viewBox="0 0 10 10"><defs><linearGradient id="rg" x1="0" y1="0" x2="0" y2="1"><stop offset="0" stop-color="#f02a2a"/><stop offset="1" stop-color="#c82222"/></linearGradient></defs><rect x="0" y="0" width="10" height="10" rx="2.6" fill="url(#rg)"/><rect x="4.1" y="2" width="1.8" height="4.2" fill="#fff"/><rect x="4.1" y="7" width="1.8" height="1.3" fill="#fff"/></svg></div>
<div class="t cell num" style="left:1104px;top:490.1px">57</div>
<div class="cb" style="left:1214px;top:488.6px"><svg class="a" style="left:0px;top:0px" width="11" height="11" viewBox="0 0 11 11"><path d="M1 5.3 L3.9 8.3 L9.8 2.3" fill="none" stroke="#333" stroke-width="1.3"/></svg></div>
<div class="cb cbd" style="left:1342px;top:488.6px"></div>
<div class="cb" style="left:1469px;top:488.6px"></div>
<div class="a row odd" style="top:510.5px"></div>
<svg class="a" style="left:297px;top:523.8px" width="5" height="8"><path d="M0 0 L4.2 4 L0 8 Z" fill="#505050"/></svg>
<div class="t cell" style="left:319px;top:521.9px">None</div>
<div class="t cell" style="left:447px;top:521.9px">None</div>
<div class="err" style="left:578px;top:521.7px"><svg width="10" height="10" viewBox="0 0 10 10"><defs><linearGradient id="rg" x1="0" y1="0" x2="0" y2="1"><stop offset="0" stop-color="#f02a2a"/><stop offset="1" stop-color="#c82222"/></linearGradient></defs><rect x="0" y="0" width="10" height="10" rx="2.6" fill="url(#rg)"/><rect x="4.1" y="2" width="1.8" height="4.2" fill="#fff"/><rect x="4.1" y="7" width="1.8" height="1.3" fill="#fff"/></svg></div>
<div class="t cell" style="left:593px;top:521.4px">None</div>
<div class="t cell" style="left:703px;top:521.9px">Never installed</div>
<div class="t cell num" style="left:830px;top:521.9px">490000013</div>
<div class="t cell" style="left:958px;top:521.9px">WO_New_Process</div>
<div class="err" style="left:1089px;top:521.7px"><svg width="10" height="10" viewBox="0 0 10 10"><defs><linearGradient id="rg" x1="0" y1="0" x2="0" y2="1"><stop offset="0" stop-color="#f02a2a"/><stop offset="1" stop-color="#c82222"/></linearGradient></defs><rect x="0" y="0" width="10" height="10" rx="2.6" fill="url(#rg)"/><rect x="4.1" y="2" width="1.8" height="4.2" fill="#fff"/><rect x="4.1" y="7" width="1.8" height="1.3" fill="#fff"/></svg></div>
<div class="t cell num" style="left:1104px;top:521.4px">39</div>
<div class="cb" style="left:1214px;top:519.9px"><svg class="a" style="left:0px;top:0px" width="11" height="11" viewBox="0 0 11 11"><path d="M1 5.3 L3.9 8.3 L9.8 2.3" fill="none" stroke="#333" stroke-width="1.3"/></svg></div>
<div class="cb cbd" style="left:1342px;top:519.9px"></div>
<div class="cb" style="left:1469px;top:519.9px"></div>
<div class="a row even" style="top:541.7px"></div>
<svg class="a" style="left:297px;top:555.0px" width="5" height="8"><path d="M0 0 L4.2 4 L0 8 Z" fill="#505050"/></svg>
<div class="t cell" style="left:319px;top:553.1px">None</div>
<div class="t cell" style="left:447px;top:553.1px">None</div>
<div class="err" style="left:578px;top:552.9px"><svg width="10" height="10" viewBox="0 0 10 10"><defs><linearGradient id="rg" x1="0" y1="0" x2="0" y2="1"><stop offset="0" stop-color="#f02a2a"/><stop offset="1" stop-color="#c82222"/></linearGradient></defs><rect x="0" y="0" width="10" height="10" rx="2.6" fill="url(#rg)"/><rect x="4.1" y="2" width="1.8" height="4.2" fill="#fff"/><rect x="4.1" y="7" width="1.8" height="1.3" fill="#fff"/></svg></div>
<div class="t cell" style="left:593px;top:552.6px">None</div>
<div class="t cell" style="left:703px;top:553.1px">Never installed</div>
<div class="t cell num" style="left:830px;top:553.1px">490000014</div>
<div class="t cell" style="left:958px;top:553.1px">Open Job Status</div>
<div class="err" style="left:1089px;top:552.9px"><svg width="10" height="10" viewBox="0 0 10 10"><defs><linearGradient id="rg" x1="0" y1="0" x2="0" y2="1"><stop offset="0" stop-color="#f02a2a"/><stop offset="1" stop-color="#c82222"/></linearGradient></defs><rect x="0" y="0" width="10" height="10" rx="2.6" fill="url(#rg)"/><rect x="4.1" y="2" width="1.8" height="4.2" fill="#fff"/><rect x="4.1" y="7" width="1.8" height="1.3" fill="#fff"/></svg></div>
<div class="t cell num" style="left:1104px;top:552.6px">30</div>
<div class="cb" style="left:1214px;top:551.1px"><svg class="a" style="left:0px;top:0px" width="11" height="11" viewBox="0 0 11 11"><path d="M1 5.3 L3.9 8.3 L9.8 2.3" fill="none" stroke="#333" stroke-width="1.3"/></svg></div>
<div class="cb cbd" style="left:1342px;top:551.1px"></div>
<div class="cb" style="left:1469px;top:551.1px"></div>
<div class="a row odd" style="top:572.9px"></div>
<svg class="a" style="left:297px;top:586.2px" width="5" height="8"><path d="M0 0 L4.2 4 L0 8 Z" fill="#505050"/></svg>
<div class="t cell" style="left:319px;top:584.3px">None</div>
<div class="t cell" style="left:447px;top:584.3px">None</div>
<div class="err" style="left:578px;top:584.1px"><svg width="10" height="10" viewBox="0 0 10 10"><defs><linearGradient id="rg" x1="0" y1="0" x2="0" y2="1"><stop offset="0" stop-color="#f02a2a"/><stop offset="1" stop-color="#c82222"/></linearGradient></defs><rect x="0" y="0" width="10" height="10" rx="2.6" fill="url(#rg)"/><rect x="4.1" y="2" width="1.8" height="4.2" fill="#fff"/><rect x="4.1" y="7" width="1.8" height="1.3" fill="#fff"/></svg></div>
<div class="t cell" style="left:593px;top:583.8px">None</div>
<div class="t cell" style="left:703px;top:584.3px">Never installed</div>
<div class="t cell num" style="left:830px;top:584.3px">490000015</div>
<div class="t cell" style="left:958px;top:584.3px">Item</div>
<div class="err" style="left:1089px;top:584.1px"><svg width="10" height="10" viewBox="0 0 10 10"><defs><linearGradient id="rg" x1="0" y1="0" x2="0" y2="1"><stop offset="0" stop-color="#f02a2a"/><stop offset="1" stop-color="#c82222"/></linearGradient></defs><rect x="0" y="0" width="10" height="10" rx="2.6" fill="url(#rg)"/><rect x="4.1" y="2" width="1.8" height="4.2" fill="#fff"/><rect x="4.1" y="7" width="1.8" height="1.3" fill="#fff"/></svg></div>
<div class="t cell num" style="left:1104px;top:583.8px">41</div>
<div class="cb" style="left:1214px;top:582.3px"><svg class="a" style="left:0px;top:0px" width="11" height="11" viewBox="0 0 11 11"><path d="M1 5.3 L3.9 8.3 L9.8 2.3" fill="none" stroke="#333" stroke-width="1.3"/></svg></div>
<div class="cb cbd" style="left:1342px;top:582.3px"></div>
<div class="cb" style="left:1469px;top:582.3px"></div>
<div class="a row even" style="top:604.1px"></div>
<svg class="a" style="left:297px;top:617.4px" width="5" height="8"><path d="M0 0 L4.2 4 L0 8 Z" fill="#505050"/></svg>
<div class="t cell" style="left:319px;top:615.5px">None</div>
<div class="t cell" style="left:447px;top:615.5px">None</div>
<div class="err" style="left:578px;top:615.3px"><svg width="10" height="10" viewBox="0 0 10 10"><defs><linearGradient id="rg" x1="0" y1="0" x2="0" y2="1"><stop offset="0" stop-color="#f02a2a"/><stop offset="1" stop-color="#c82222"/></linearGradient></defs><rect x="0" y="0" width="10" height="10" rx="2.6" fill="url(#rg)"/><rect x="4.1" y="2" width="1.8" height="4.2" fill="#fff"/><rect x="4.1" y="7" width="1.8" height="1.3" fill="#fff"/></svg></div>
<div class="t cell" style="left:593px;top:615.0px">None</div>
<div class="t cell" style="left:703px;top:615.5px">Never installed</div>
<div class="t cell num" style="left:830px;top:615.5px">490000016</div>
<div class="t cell" style="left:958px;top:615.5px">Open Sales Orders</div>
<div class="err" style="left:1089px;top:615.3px"><svg width="10" height="10" viewBox="0 0 10 10"><defs><linearGradient id="rg" x1="0" y1="0" x2="0" y2="1"><stop offset="0" stop-color="#f02a2a"/><stop offset="1" stop-color="#c82222"/></linearGradient></defs><rect x="0" y="0" width="10" height="10" rx="2.6" fill="url(#rg)"/><rect x="4.1" y="2" width="1.8" height="4.2" fill="#fff"/><rect x="4.1" y="7" width="1.8" height="1.3" fill="#fff"/></svg></div>
<div class="t cell num" style="left:1104px;top:615.0px">92</div>
<div class="cb" style="left:1214px;top:613.5px"><svg class="a" style="left:0px;top:0px" width="11" height="11" viewBox="0 0 11 11"><path d="M1 5.3 L3.9 8.3 L9.8 2.3" fill="none" stroke="#333" stroke-width="1.3"/></svg></div>
<div class="cb cbd" style="left:1342px;top:613.5px"></div>
<div class="cb" style="left:1469px;top:613.5px"></div>
<div class="a row odd" style="top:635.3px"></div>
<svg class="a" style="left:297px;top:648.6px" width="5" height="8"><path d="M0 0 L4.2 4 L0 8 Z" fill="#505050"/></svg>
<div class="t cell" style="left:319px;top:646.7px">None</div>
<div class="t cell" style="left:447px;top:646.7px">None</div>
<div class="err" style="left:578px;top:646.5px"><svg width="10" height="10" viewBox="0 0 10 10"><defs><linearGradient id="rg" x1="0" y1="0" x2="0" y2="1"><stop offset="0" stop-color="#f02a2a"/><stop offset="1" stop-color="#c82222"/></linearGradient></defs><rect x="0" y="0" width="10" height="10" rx="2.6" fill="url(#rg)"/><rect x="4.1" y="2" width="1.8" height="4.2" fill="#fff"/><rect x="4.1" y="7" width="1.8" height="1.3" fill="#fff"/></svg></div>
<div class="t cell" style="left:593px;top:646.2px">None</div>
<div class="t cell" style="left:703px;top:646.7px">Never installed</div>
<div class="t cell num" style="left:830px;top:646.7px">490000017</div>
<div class="t cell" style="left:958px;top:646.7px">Sales (Cube)</div>
<div class="err" style="left:1089px;top:646.5px"><svg width="10" height="10" viewBox="0 0 10 10"><defs><linearGradient id="rg" x1="0" y1="0" x2="0" y2="1"><stop offset="0" stop-color="#f02a2a"/><stop offset="1" stop-color="#c82222"/></linearGradient></defs><rect x="0" y="0" width="10" height="10" rx="2.6" fill="url(#rg)"/><rect x="4.1" y="2" width="1.8" height="4.2" fill="#fff"/><rect x="4.1" y="7" width="1.8" height="1.3" fill="#fff"/></svg></div>
<div class="t cell num" style="left:1104px;top:646.2px">56</div>
<div class="cb" style="left:1214px;top:644.7px"><svg class="a" style="left:0px;top:0px" width="11" height="11" viewBox="0 0 11 11"><path d="M1 5.3 L3.9 8.3 L9.8 2.3" fill="none" stroke="#333" stroke-width="1.3"/></svg></div>
<div class="cb cbd" style="left:1342px;top:644.7px"></div>
<div class="cb" style="left:1469px;top:644.7px"></div>
<div class="a row even" style="top:666.6px"></div>
<svg class="a" style="left:297px;top:679.9px" width="5" height="8"><path d="M0 0 L4.2 4 L0 8 Z" fill="#505050"/></svg>
<div class="t cell" style="left:319px;top:678.0px">None</div>
<div class="t cell" style="left:447px;top:678.0px">None</div>
<div class="err" style="left:578px;top:677.8px"><svg width="10" height="10" viewBox="0 0 10 10"><defs><linearGradient id="rg" x1="0" y1="0" x2="0" y2="1"><stop offset="0" stop-color="#f02a2a"/><stop offset="1" stop-color="#c82222"/></linearGradient></defs><rect x="0" y="0" width="10" height="10" rx="2.6" fill="url(#rg)"/><rect x="4.1" y="2" width="1.8" height="4.2" fill="#fff"/><rect x="4.1" y="7" width="1.8" height="1.3" fill="#fff"/></svg></div>
<div class="t cell" style="left:593px;top:677.5px">None</div>
<div class="t cell" style="left:703px;top:678.0px">Never installed</div>
<div class="t cell num" style="left:830px;top:678.0px">490000018</div>
<div class="t cell" style="left:958px;top:678.0px">Vendor Analysis</div>
<div class="err" style="left:1089px;top:677.8px"><svg width="10" height="10" viewBox="0 0 10 10"><defs><linearGradient id="rg" x1="0" y1="0" x2="0" y2="1"><stop offset="0" stop-color="#f02a2a"/><stop offset="1" stop-color="#c82222"/></linearGradient></defs><rect x="0" y="0" width="10" height="10" rx="2.6" fill="url(#rg)"/><rect x="4.1" y="2" width="1.8" height="4.2" fill="#fff"/><rect x="4.1" y="7" width="1.8" height="1.3" fill="#fff"/></svg></div>
<div class="t cell num" style="left:1104px;top:677.5px">45</div>
<div class="cb" style="left:1214px;top:676.0px"><svg class="a" style="left:0px;top:0px" width="11" height="11" viewBox="0 0 11 11"><path d="M1 5.3 L3.9 8.3 L9.8 2.3" fill="none" stroke="#333" stroke-width="1.3"/></svg></div>
<div class="cb cbd" style="left:1342px;top:676.0px"></div>
<div class="cb" style="left:1469px;top:676.0px"></div>
<div class="a row odd" style="top:697.8px"></div>
<svg class="a" style="left:297px;top:711.1px" width="5" height="8"><path d="M0 0 L4.2 4 L0 8 Z" fill="#505050"/></svg>
<div class="t cell" style="left:319px;top:709.2px">None</div>
<div class="t cell" style="left:447px;top:709.2px">None</div>
<div class="err" style="left:578px;top:709.0px"><svg width="10" height="10" viewBox="0 0 10 10"><defs><linearGradient id="rg" x1="0" y1="0" x2="0" y2="1"><stop offset="0" stop-color="#f02a2a"/><stop offset="1" stop-color="#c82222"/></linearGradient></defs><rect x="0" y="0" width="10" height="10" rx="2.6" fill="url(#rg)"/><rect x="4.1" y="2" width="1.8" height="4.2" fill="#fff"/><rect x="4.1" y="7" width="1.8" height="1.3" fill="#fff"/></svg></div>
<div class="t cell" style="left:593px;top:708.7px">None</div>
<div class="t cell" style="left:703px;top:709.2px">Never installed</div>
<div class="t cell num" style="left:830px;top:709.2px">490000019</div>
<div class="t cell" style="left:958px;top:709.2px">Action by Vendor</div>
<div class="err" style="left:1089px;top:709.0px"><svg width="10" height="10" viewBox="0 0 10 10"><defs><linearGradient id="rg" x1="0" y1="0" x2="0" y2="1"><stop offset="0" stop-color="#f02a2a"/><stop offset="1" stop-color="#c82222"/></linearGradient></defs><rect x="0" y="0" width="10" height="10" rx="2.6" fill="url(#rg)"/><rect x="4.1" y="2" width="1.8" height="4.2" fill="#fff"/><rect x="4.1" y="7" width="1.8" height="1.3" fill="#fff"/></svg></div>
<div class="t cell num" style="left:1104px;top:708.7px">42</div>
<div class="cb" style="left:1214px;top:707.2px"><svg class="a" style="left:0px;top:0px" width="11" height="11" viewBox="0 0 11 11"><path d="M1 5.3 L3.9 8.3 L9.8 2.3" fill="none" stroke="#333" stroke-width="1.3"/></svg></div>
<div class="cb cbd" style="left:1342px;top:707.2px"></div>
<div class="cb" style="left:1469px;top:707.2px"></div>
<div class="a row even" style="top:729.0px"></div>
<svg class="a" style="left:297px;top:742.3px" width="5" height="8"><path d="M0 0 L4.2 4 L0 8 Z" fill="#505050"/></svg>
<div class="t cell" style="left:319px;top:740.4px">None</div>
<div class="t cell" style="left:447px;top:740.4px">None</div>
<div class="err" style="left:578px;top:740.2px"><svg width="10" height="10" viewBox="0 0 10 10"><defs><linearGradient id="rg" x1="0" y1="0" x2="0" y2="1"><stop offset="0" stop-color="#f02a2a"/><stop offset="1" stop-color="#c82222"/></linearGradient></defs><rect x="0" y="0" width="10" height="10" rx="2.6" fill="url(#rg)"/><rect x="4.1" y="2" width="1.8" height="4.2" fill="#fff"/><rect x="4.1" y="7" width="1.8" height="1.3" fill="#fff"/></svg></div>
<div class="t cell" style="left:593px;top:739.9px">None</div>
<div class="t cell" style="left:703px;top:740.4px">Never installed</div>
<div class="t cell num" style="left:830px;top:740.4px">490000020</div>
<div class="t cell" style="left:958px;top:740.4px">Low Stock</div>
<div class="err" style="left:1089px;top:740.2px"><svg width="10" height="10" viewBox="0 0 10 10"><defs><linearGradient id="rg" x1="0" y1="0" x2="0" y2="1"><stop offset="0" stop-color="#f02a2a"/><stop offset="1" stop-color="#c82222"/></linearGradient></defs><rect x="0" y="0" width="10" height="10" rx="2.6" fill="url(#rg)"/><rect x="4.1" y="2" width="1.8" height="4.2" fill="#fff"/><rect x="4.1" y="7" width="1.8" height="1.3" fill="#fff"/></svg></div>
<div class="t cell num" style="left:1104px;top:739.9px">19</div>
<div class="cb" style="left:1214px;top:738.4px"><svg class="a" style="left:0px;top:0px" width="11" height="11" viewBox="0 0 11 11"><path d="M1 5.3 L3.9 8.3 L9.8 2.3" fill="none" stroke="#333" stroke-width="1.3"/></svg></div>
<div class="cb cbd" style="left:1342px;top:738.4px"></div>
<div class="cb" style="left:1469px;top:738.4px"></div>
<div class="a row odd" style="top:760.2px"></div>
<svg class="a" style="left:297px;top:773.5px" width="5" height="8"><path d="M0 0 L4.2 4 L0 8 Z" fill="#505050"/></svg>
<div class="t cell" style="left:319px;top:771.6px">None</div>
<div class="t cell" style="left:447px;top:771.6px">None</div>
<div class="err" style="left:578px;top:771.4px"><svg width="10" height="10" viewBox="0 0 10 10"><defs><linearGradient id="rg" x1="0" y1="0" x2="0" y2="1"><stop offset="0" stop-color="#f02a2a"/><stop offset="1" stop-color="#c82222"/></linearGradient></defs><rect x="0" y="0" width="10" height="10" rx="2.6" fill="url(#rg)"/><rect x="4.1" y="2" width="1.8" height="4.2" fill="#fff"/><rect x="4.1" y="7" width="1.8" height="1.3" fill="#fff"/></svg></div>
<div class="t cell" style="left:593px;top:771.1px">None</div>
<div class="t cell" style="left:703px;top:771.6px">Never installed</div>
<div class="t cell num" style="left:830px;top:771.6px">490000021</div>
<div class="t cell" style="left:958px;top:771.6px">Open Invoices</div>
<div class="err" style="left:1089px;top:771.4px"><svg width="10" height="10" viewBox="0 0 10 10"><defs><linearGradient id="rg" x1="0" y1="0" x2="0" y2="1"><stop offset="0" stop-color="#f02a2a"/><stop offset="1" stop-color="#c82222"/></linearGradient></defs><rect x="0" y="0" width="10" height="10" rx="2.6" fill="url(#rg)"/><rect x="4.1" y="2" width="1.8" height="4.2" fill="#fff"/><rect x="4.1" y="7" width="1.8" height="1.3" fill="#fff"/></svg></div>
<div class="t cell num" style="left:1104px;top:771.1px">61</div>
<div class="cb" style="left:1214px;top:769.6px"><svg class="a" style="left:0px;top:0px" width="11" height="11" viewBox="0 0 11 11"><path d="M1 5.3 L3.9 8.3 L9.8 2.3" fill="none" stroke="#333" stroke-width="1.3"/></svg></div>
<div class="cb cbd" style="left:1342px;top:769.6px"></div>
<div class="cb" style="left:1469px;top:769.6px"></div>
<div class="a row even" style="top:791.4px"></div>
<svg class="a" style="left:297px;top:804.7px" width="5" height="8"><path d="M0 0 L4.2 4 L0 8 Z" fill="#505050"/></svg>
<div class="t cell" style="left:319px;top:802.8px">None</div>
<div class="t cell" style="left:447px;top:802.8px">None</div>
<div class="err" style="left:578px;top:802.6px"><svg width="10" height="10" viewBox="0 0 10 10"><defs><linearGradient id="rg" x1="0" y1="0" x2="0" y2="1"><stop offset="0" stop-color="#f02a2a"/><stop offset="1" stop-color="#c82222"/></linearGradient></defs><rect x="0" y="0" width="10" height="10" rx="2.6" fill="url(#rg)"/><rect x="4.1" y="2" width="1.8" height="4.2" fill="#fff"/><rect x="4.1" y="7" width="1.8" height="1.3" fill="#fff"/></svg></div>
<div class="t cell" style="left:593px;top:802.3px">None</div>
<div class="t cell" style="left:703px;top:802.8px">Never installed</div>
<div class="t cell num" style="left:830px;top:802.8px">490000022</div>
<div class="t cell" style="left:958px;top:802.8px">Item Sales</div>
<div class="err" style="left:1089px;top:802.6px"><svg width="10" height="10" viewBox="0 0 10 10"><defs><linearGradient id="rg" x1="0" y1="0" x2="0" y2="1"><stop offset="0" stop-color="#f02a2a"/><stop offset="1" stop-color="#c82222"/></linearGradient></defs><rect x="0" y="0" width="10" height="10" rx="2.6" fill="url(#rg)"/><rect x="4.1" y="2" width="1.8" height="4.2" fill="#fff"/><rect x="4.1" y="7" width="1.8" height="1.3" fill="#fff"/></svg></div>
<div class="t cell num" style="left:1104px;top:802.3px">43</div>
<div class="cb" style="left:1214px;top:800.8px"><svg class="a" style="left:0px;top:0px" width="11" height="11" viewBox="0 0 11 11"><path d="M1 5.3 L3.9 8.3 L9.8 2.3" fill="none" stroke="#333" stroke-width="1.3"/></svg></div>
<div class="cb cbd" style="left:1342px;top:800.8px"></div>
<div class="cb" style="left:1469px;top:800.8px"></div>
<div class="a row odd" style="top:822.7px"></div>
<svg class="a" style="left:297px;top:836.0px" width="5" height="8"><path d="M0 0 L4.2 4 L0 8 Z" fill="#505050"/></svg>
<div class="t cell" style="left:319px;top:834.1px">None</div>
<div class="t cell" style="left:447px;top:834.1px">None</div>
<div class="err" style="left:578px;top:833.9px"><svg width="10" height="10" viewBox="0 0 10 10"><defs><linearGradient id="rg" x1="0" y1="0" x2="0" y2="1"><stop offset="0" stop-color="#f02a2a"/><stop offset="1" stop-color="#c82222"/></linearGradient></defs><rect x="0" y="0" width="10" height="10" rx="2.6" fill="url(#rg)"/><rect x="4.1" y="2" width="1.8" height="4.2" fill="#fff"/><rect x="4.1" y="7" width="1.8" height="1.3" fill="#fff"/></svg></div>
<div class="t cell" style="left:593px;top:833.6px">None</div>
<div class="t cell" style="left:703px;top:834.1px">Never installed</div>
<div class="t cell num" style="left:830px;top:834.1px">490000023</div>
<div class="t cell" style="left:958px;top:834.1px">Top Vendors</div>
<div class="err" style="left:1089px;top:833.9px"><svg width="10" height="10" viewBox="0 0 10 10"><defs><linearGradient id="rg" x1="0" y1="0" x2="0" y2="1"><stop offset="0" stop-color="#f02a2a"/><stop offset="1" stop-color="#c82222"/></linearGradient></defs><rect x="0" y="0" width="10" height="10" rx="2.6" fill="url(#rg)"/><rect x="4.1" y="2" width="1.8" height="4.2" fill="#fff"/><rect x="4.1" y="7" width="1.8" height="1.3" fill="#fff"/></svg></div>
<div class="t cell num" style="left:1104px;top:833.6px">25</div>
<div class="cb" style="left:1214px;top:832.1px"><svg class="a" style="left:0px;top:0px" width="11" height="11" viewBox="0 0 11 11"><path d="M1 5.3 L3.9 8.3 L9.8 2.3" fill="none" stroke="#333" stroke-width="1.3"/></svg></div>
<div class="cb cbd" style="left:1342px;top:832.1px"></div>
<div class="cb" style="left:1469px;top:832.1px"></div>
<div class="a row even" style="top:853.9px"></div>
<svg class="a" style="left:297px;top:867.2px" width="5" height="8"><path d="M0 0 L4.2 4 L0 8 Z" fill="#505050"/></svg>
<div class="t cell" style="left:319px;top:865.3px">None</div>
<div class="t cell" style="left:447px;top:865.3px">None</div>
<div class="err" style="left:578px;top:865.1px"><svg width="10" height="10" viewBox="0 0 10 10"><defs><linearGradient id="rg" x1="0" y1="0" x2="0" y2="1"><stop offset="0" stop-color="#f02a2a"/><stop offset="1" stop-color="#c82222"/></linearGradient></defs><rect x="0" y="0" width="10" height="10" rx="2.6" fill="url(#rg)"/><rect x="4.1" y="2" width="1.8" height="4.2" fill="#fff"/><rect x="4.1" y="7" width="1.8" height="1.3" fill="#fff"/></svg></div>
<div class="t cell" style="left:593px;top:864.8px">None</div>
<div class="t cell" style="left:703px;top:865.3px">Never installed</div>
<div class="t cell num" style="left:830px;top:865.3px">490000024</div>
<div class="t cell" style="left:958px;top:865.3px">Customer Analysis</div>
<div class="err" style="left:1089px;top:865.1px"><svg width="10" height="10" viewBox="0 0 10 10"><defs><linearGradient id="rg" x1="0" y1="0" x2="0" y2="1"><stop offset="0" stop-color="#f02a2a"/><stop offset="1" stop-color="#c82222"/></linearGradient></defs><rect x="0" y="0" width="10" height="10" rx="2.6" fill="url(#rg)"/><rect x="4.1" y="2" width="1.8" height="4.2" fill="#fff"/><rect x="4.1" y="7" width="1.8" height="1.3" fill="#fff"/></svg></div>
<div class="t cell num" style="left:1104px;top:864.8px">14</div>
<div class="cb" style="left:1214px;top:863.3px"><svg class="a" style="left:0px;top:0px" width="11" height="11" viewBox="0 0 11 11"><path d="M1 5.3 L3.9 8.3 L9.8 2.3" fill="none" stroke="#333" stroke-width="1.3"/></svg></div>
<div class="cb cbd" style="left:1342px;top:863.3px"></div>
<div class="cb" style="left:1469px;top:863.3px"></div>
<div class="a vline" style="left:439px;top:75px;height:794px"></div>
<div class="a vline" style="left:567px;top:75px;height:794px"></div>
<div class="a vline" style="left:694px;top:75px;height:794px"></div>
<div class="a vline" style="left:822px;top:75px;height:794px"></div>
<div class="a vline" style="left:950px;top:75px;height:794px"></div>
<div class="a vline" style="left:1078px;top:75px;height:794px"></div>
<div class="a vline" style="left:1206px;top:75px;height:794px"></div>
<div class="a vline" style="left:1333px;top:75px;height:794px"></div>
<div class="a vline" style="left:1461px;top:75px;height:794px"></div>
<div class="a" style="left:1589px;top:105px;width:1px;height:764px;background:#fff"></div>
</div>
<div class="a" style="left:283px;top:47px;width:1324px;height:823px;border:1px solid #cdcdcd"></div>
<div class="a" style="left:1590px;top:105px;width:16px;height:764px;background:#efefef"></div>
<div class="a" style="left:1590px;top:122px;width:15px;height:315px;background:#cbcbcb"></div>
<svg class="a" style="left:1593px;top:110px" width="10" height="8"><path d="M1 6.2 L4.6 2.4 L8.2 6.2" fill="none" stroke="#444" stroke-width="2"/></svg>
<svg class="a" style="left:1593px;top:857px" width="10" height="8"><path d="M1 1.4 L4.6 5.4 L8.2 1.4" fill="none" stroke="#444" stroke-width="2"/></svg>
<div class="btn" style="left:280px;width:42px"><span style="left:7.5px">Back</span></div>
<div class="btn" style="left:1280px;width:40px"><span style="left:7px">Next</span></div>
</body></html>
